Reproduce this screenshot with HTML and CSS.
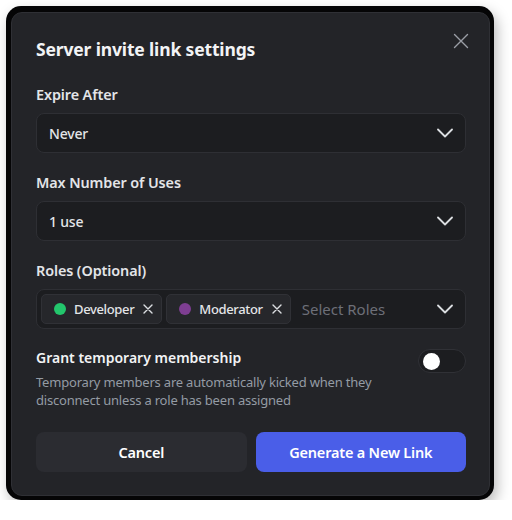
FILE: index.html
```html
<!DOCTYPE html>
<html lang="en">
<head>
<meta charset="utf-8">
<title>Server invite link settings</title>
<link rel="stylesheet" href="styles.css">
</head>
<body>
<div class="frame">
  <div class="modal">
    <button class="close" aria-label="Close">
      <svg width="16" height="16" viewBox="0 0 16 16"><path d="M1.5 1.5L14.5 14.5M14.5 1.5L1.5 14.5" stroke="currentColor" stroke-width="1.4" fill="none" stroke-linecap="round"/></svg>
    </button>
    <h1 class="title">Server invite link settings</h1>

    <div class="field">
      <div class="label">Expire After</div>
      <div class="select">
        <span class="value">Never</span>
        <svg class="chev" width="16" height="10" viewBox="0 0 16 10"><path d="M1 1.5L8 8.5L15 1.5" stroke="currentColor" stroke-width="1.8" fill="none" stroke-linecap="round" stroke-linejoin="round"/></svg>
      </div>
    </div>

    <div class="field">
      <div class="label">Max Number of Uses</div>
      <div class="select">
        <span class="value">1 use</span>
        <svg class="chev" width="16" height="10" viewBox="0 0 16 10"><path d="M1 1.5L8 8.5L15 1.5" stroke="currentColor" stroke-width="1.8" fill="none" stroke-linecap="round" stroke-linejoin="round"/></svg>
      </div>
    </div>

    <div class="field">
      <div class="label">Roles (Optional)</div>
      <div class="select roles">
        <span class="chip"><span class="dot dot-green"></span><span class="chip-name">Developer</span><svg class="chip-x" width="10" height="10" viewBox="0 0 10 10"><path d="M1 1L9 9M9 1L1 9" stroke="currentColor" stroke-width="1.4" fill="none" stroke-linecap="round"/></svg></span>
        <span class="chip"><span class="dot dot-purple"></span><span class="chip-name">Moderator</span><svg class="chip-x" width="10" height="10" viewBox="0 0 10 10"><path d="M1 1L9 9M9 1L1 9" stroke="currentColor" stroke-width="1.4" fill="none" stroke-linecap="round"/></svg></span>
        <span class="placeholder">Select Roles</span>
        <svg class="chev" width="16" height="10" viewBox="0 0 16 10"><path d="M1 1.5L8 8.5L15 1.5" stroke="currentColor" stroke-width="1.8" fill="none" stroke-linecap="round" stroke-linejoin="round"/></svg>
      </div>
    </div>

    <div class="toggle-row">
      <div class="toggle-text">
        <div class="toggle-title">Grant temporary membership</div>
        <div class="toggle-desc">Temporary members are automatically kicked when they disconnect unless a role has been assigned</div>
      </div>
      <span class="switch"><span class="knob"></span></span>
    </div>

    <div class="actions">
      <button class="btn btn-secondary">Cancel</button>
      <button class="btn btn-primary">Generate a New Link</button>
    </div>
  </div>
</div>
</body>
</html>
```

FILE: styles.css
```css
* { box-sizing: border-box; }

html, body {
  margin: 0;
  padding: 0;
  background: #ffffff;
}

body {
  font-family: "Noto Sans", "Liberation Sans", sans-serif;
  padding: 6px 0 0 6px;
}

.frame {
  width: 488px;
  background: #050506;
  border-radius: 15px;
  padding: 6px 4px 4px 5px;
  box-shadow: 3px 6px 14px rgba(0, 0, 0, 0.28);
}

.modal {
  position: relative;
  background: #232428;
  border: 1px solid #2f3035;
  border-radius: 11px;
  padding: 24px 23px 23px 24px;
  color: #f2f3f5;
}

.close {
  position: absolute;
  top: 20px;
  right: 20px;
  width: 16px;
  height: 16px;
  padding: 0;
  border: 0;
  background: none;
  color: #9a9ea6;
  display: flex;
}

.title {
  margin: 0;
  font-size: 17.5px;
  line-height: 24px;
  font-weight: 700;
  letter-spacing: -0.15px;
  color: #f2f3f5;
}

.field {
  margin-top: 24px;
}

.field + .field {
  margin-top: 20px;
}

.label {
  font-size: 14.4px;
  line-height: 20px;
  font-weight: 600;
  letter-spacing: -0.1px;
  color: #e3e5e8;
  margin-bottom: 8px;
}

.select {
  height: 40px;
  background: #1c1d20;
  border: 1px solid #2e2f34;
  border-radius: 8px;
  display: flex;
  align-items: center;
  padding: 0 12px;
}

.value {
  flex: 1;
  font-size: 14px;
  font-weight: 500;
  letter-spacing: -0.2px;
  color: #e3e5e8;
}

.chev {
  color: #dbdee1;
  flex: none;
}

.roles {
  padding-left: 4px;
  gap: 4px;
}

.chip {
  height: 30px;
  display: flex;
  align-items: center;
  padding: 0 8px 0 12px;
  background: #26272b;
  border: 1px solid #303136;
  border-radius: 5px;
  font-size: 13px;
  font-weight: 500;
  letter-spacing: -0.35px;
  color: #e3e5e8;
}

.dot {
  width: 12px;
  height: 12px;
  border-radius: 50%;
  flex: none;
  margin-right: 8px;
}

.dot-green { background: #23c66c; }
.dot-purple { background: #7e3e92; }

.chip-x {
  color: #dbdee1;
  margin-left: 9px;
  flex: none;
}

.placeholder {
  flex: 1;
  margin-left: 7px;
  font-size: 15px;
  color: #6d6f78;
}

.toggle-row {
  margin-top: 19px;
  display: flex;
  align-items: flex-start;
  gap: 16px;
}

.toggle-text {
  flex: 1;
}

.toggle-title {
  font-size: 14px;
  line-height: 20px;
  font-weight: 600;
  color: #f2f3f5;
}

.toggle-desc {
  margin-top: 5px;
  font-size: 13px;
  line-height: 18px;
  letter-spacing: -0.2px;
  color: #949ba4;
}

.switch {
  flex: none;
  width: 48px;
  height: 24px;
  margin-top: 1px;
  border-radius: 12px;
  background: #1c1d20;
  border: 1px solid #303136;
  display: flex;
  align-items: center;
  padding-left: 4px;
}

.knob {
  width: 17px;
  height: 17px;
  border-radius: 50%;
  background: #ffffff;
}

.actions {
  margin-top: 23px;
  display: grid;
  grid-template-columns: 1fr 1fr;
  gap: 9px;
}

.btn {
  height: 40px;
  border: 0;
  border-radius: 8px;
  font-family: inherit;
  font-size: 14.5px;
  font-weight: 600;
  letter-spacing: -0.2px;
  color: #ffffff;
}

.btn-secondary {
  background: #2b2c31;
}

.btn-primary {
  background: #4a5ee8;
}
```
